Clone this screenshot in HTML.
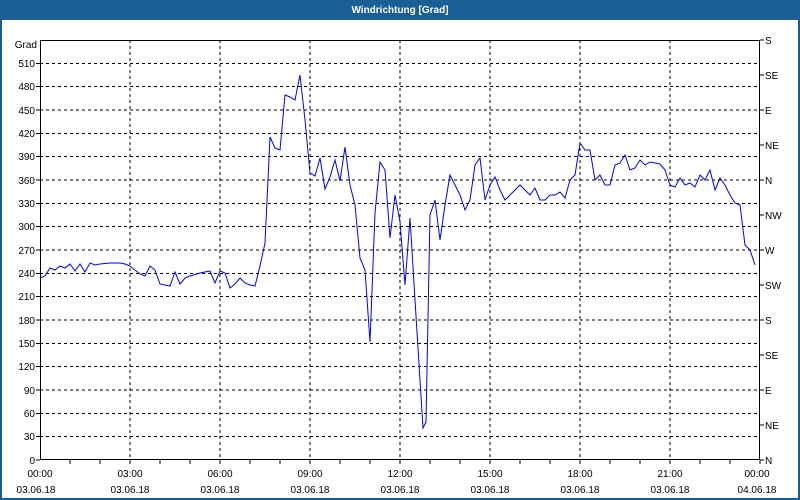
<!DOCTYPE html>
<html><head><meta charset="utf-8"><style>
html,body{margin:0;padding:0;width:800px;height:500px;overflow:hidden;background:#fff}
svg{display:block}
text{font-family:"Liberation Sans","DejaVu Sans",sans-serif;font-size:10px;fill:#000}
</style></head><body>
<svg width="800" height="500" viewBox="0 0 800 500">
<rect x="0" y="0" width="800" height="500" fill="#1a5e96"/>
<rect x="2" y="20" width="796" height="478" fill="#fff"/>
<text x="400" y="13" text-anchor="middle" style="fill:#fff;font-weight:bold;font-size:10px">Windrichtung [Grad]</text>
<g stroke="#000" stroke-width="1" stroke-dasharray="3,3" shape-rendering="crispEdges">
<line x1="40" x2="760" y1="436.7" y2="436.7"/><line x1="40" x2="760" y1="413.3" y2="413.3"/>
<line x1="40" x2="760" y1="390" y2="390"/><line x1="40" x2="760" y1="366.7" y2="366.7"/>
<line x1="40" x2="760" y1="343.3" y2="343.3"/><line x1="40" x2="760" y1="320" y2="320"/>
<line x1="40" x2="760" y1="296.7" y2="296.7"/><line x1="40" x2="760" y1="273.3" y2="273.3"/>
<line x1="40" x2="760" y1="250" y2="250"/><line x1="40" x2="760" y1="226.7" y2="226.7"/>
<line x1="40" x2="760" y1="203.3" y2="203.3"/><line x1="40" x2="760" y1="180" y2="180"/>
<line x1="40" x2="760" y1="156.7" y2="156.7"/><line x1="40" x2="760" y1="133.3" y2="133.3"/>
<line x1="40" x2="760" y1="110" y2="110"/><line x1="40" x2="760" y1="86.7" y2="86.7"/>
<line x1="40" x2="760" y1="63.3" y2="63.3"/>
<line y1="40" y2="460" x1="130" x2="130"/><line y1="40" y2="460" x1="220" x2="220"/>
<line y1="40" y2="460" x1="310" x2="310"/><line y1="40" y2="460" x1="400" x2="400"/>
<line y1="40" y2="460" x1="490" x2="490"/><line y1="40" y2="460" x1="580" x2="580"/>
<line y1="40" y2="460" x1="670" x2="670"/>
</g>
<g stroke="#000" stroke-width="1" fill="none" shape-rendering="crispEdges">
<rect x="40.5" y="40.5" width="719" height="419"/>
<path d="M70 460v4M100 460v4M130 460v4M160 460v4M190 460v4M220 460v4M250 460v4M280 460v4M310 460v4M340 460v4M370 460v4M400 460v4M430 460v4M460 460v4M490 460v4M520 460v4M550 460v4M580 460v4M610 460v4M640 460v4M670 460v4M700 460v4M730 460v4M760 460v4"/>
<path d="M760 40h4M760 75h4M760 110h4M760 145h4M760 180h4M760 215h4M760 250h4M760 285h4M760 320h4M760 355h4M760 390h4M760 425h4M760 460h4"/>
<path d="M36 460h4M36 436.7h4M36 413.3h4M36 390h4M36 366.7h4M36 343.3h4M36 320h4M36 296.7h4M36 273.3h4M36 250h4M36 226.7h4M36 203.3h4M36 180h4M36 156.7h4M36 133.3h4M36 110h4M36 86.7h4M36 63.3h4"/>
</g>
<g text-anchor="end">
<text x="37" y="48">Grad</text>
<text x="35" y="67">510</text><text x="35" y="90">480</text><text x="35" y="114">450</text>
<text x="35" y="137">420</text><text x="35" y="160">390</text><text x="35" y="184">360</text>
<text x="35" y="207">330</text><text x="35" y="230">300</text><text x="35" y="254">270</text>
<text x="35" y="277">240</text><text x="35" y="300">210</text><text x="35" y="324">180</text>
<text x="35" y="347">150</text><text x="35" y="370">120</text><text x="35" y="394">90</text>
<text x="35" y="417">60</text><text x="35" y="440">30</text><text x="35" y="464">0</text>
</g>
<g>
<text x="765" y="44">S</text><text x="765" y="79">SE</text><text x="765" y="114">E</text>
<text x="765" y="149">NE</text><text x="765" y="184">N</text><text x="765" y="219">NW</text>
<text x="765" y="254">W</text><text x="765" y="289">SW</text><text x="765" y="324">S</text>
<text x="765" y="359">SE</text><text x="765" y="394">E</text><text x="765" y="429">NE</text>
<text x="765" y="464">N</text>
</g>
<g text-anchor="middle">
<text x="40" y="477">00:00</text><text x="130" y="477">03:00</text><text x="220" y="477">06:00</text>
<text x="310" y="477">09:00</text><text x="400" y="477">12:00</text><text x="490" y="477">15:00</text>
<text x="580" y="477">18:00</text><text x="670" y="477">21:00</text><text x="757" y="477">00:00</text>
<text x="36" y="493">03.06.18</text><text x="130" y="493">03.06.18</text><text x="220" y="493">03.06.18</text>
<text x="310" y="493">03.06.18</text><text x="400" y="493">03.06.18</text><text x="490" y="493">03.06.18</text>
<text x="580" y="493">03.06.18</text><text x="670" y="493">03.06.18</text><text x="757" y="493">04.06.18</text>
</g>
<polyline fill="none" stroke="#0000ff" stroke-width="1" points="40,278 45,276 50,268 55,270 60,266 65,268 70,264 75,271 80,264 85,272 90,263 95,265 100,264 110,263 120,263 125,264 130,266 135,270 140,274 145,276 150,266 155,270 160,284 165,285 170,286 175,272 180,284 185,278 190,276 200,273 210,271 215,283 220,271 225,273 230,288 235,284 240,278 245,283 250,285 255,286 260,266 265,243 270,137 275,148 280,150 285,95 290,97 295,100 300,75 305,120 310,173 315,176 320,158 325,189 330,177 335,160 340,181 345,147 350,185 355,205 360,258 365,270 370,342 375,213 380,162 385,170 390,238 395,195 400,222 405,285 410,218 415,300 420,380 423,428 426,422 430,215 435,200 440,240 445,205 450,175 455,185 460,195 465,210 470,200 475,165 480,158 485,200 490,185 495,177 500,190 505,200 510,195 515,190 520,185 525,190 530,195 535,188 540,200 545,200 550,195 555,195 560,192 565,198 570,180 575,175 580,143 585,150 590,150 595,180 600,175 605,185 610,185 615,165 620,163 625,155 630,170 635,168 640,160 645,165 650,162 660,164 665,170 670,185 675,187 680,178 685,185 690,183 695,187 700,175 705,180 710,170 715,190 720,178 725,185 730,195 735,203 740,205 745,245 750,250 755,265"/>
</svg>
</body></html>
